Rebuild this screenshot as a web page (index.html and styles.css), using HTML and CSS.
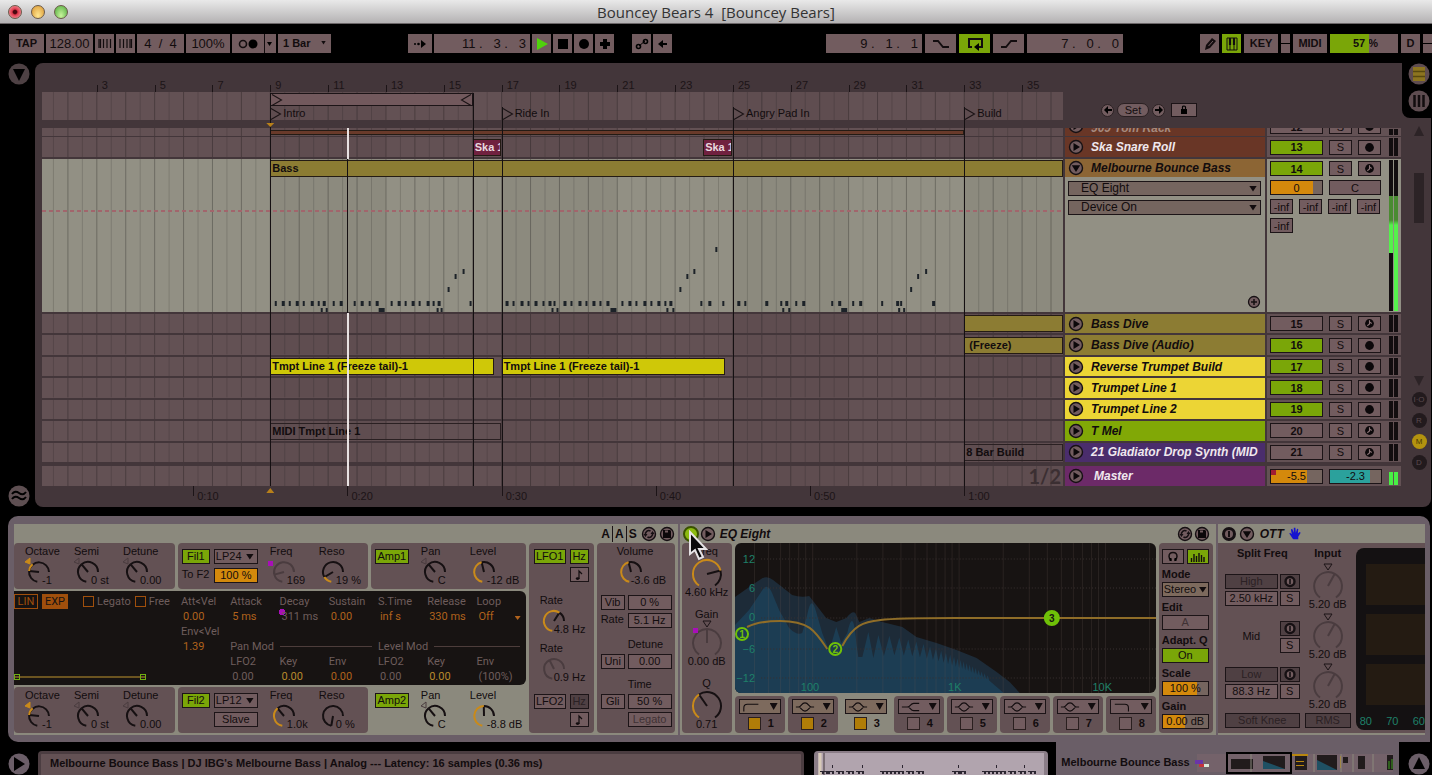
FILE: index.html
```html
<!DOCTYPE html>
<html lang="en">
<head>
    <meta charset="UTF-8"/>
    <title>Bouncey Bears 4</title>
    <link rel="stylesheet" href="styles.css">
</head>
<body>
<!-- shared icons -->
<svg class="defs" width="0" height="0">
    <defs>
        <symbol id="play" viewBox="0 0 16 16"><circle cx="8" cy="8" r="6.5" fill="#725c5f" stroke="#161013" stroke-width="1.4"/><path d="M5.5 4 12 8 5.5 12z" fill="#0c080a"/></symbol>
        <symbol id="fold" viewBox="0 0 16 16"><circle cx="8" cy="8" r="6.5" fill="#725c5f" stroke="#161013" stroke-width="1.4"/><path d="M3.8 5.2h8.4L8 12z" fill="#0c080a"/></symbol>
        <symbol id="power" viewBox="0 0 16 16"><circle cx="8" cy="8" r="5.5" fill="#725c5f" stroke="#161013" stroke-width="3"/><path d="M8 5v6" stroke="#161013" stroke-width="2"/></symbol>
        <symbol id="swap" viewBox="0 0 16 16"><circle cx="8" cy="8" r="6.5" fill="#725c5f" stroke="#161013" stroke-width="1.4"/><path d="M4.500 9a3.500 3.500 0 0 1 5-4M11.500 7a3.500 3.500 0 0 1-5 4" fill="none" stroke="#161013" stroke-width="1.6"/><path d="M2.500 8h4l-2 3zM13.500 8h-4l2-3z" fill="#161013"/></symbol>
        <symbol id="save" viewBox="0 0 16 16"><circle cx="8" cy="8" r="6.5" fill="#725c5f" stroke="#161013" stroke-width="1.4"/><path d="M4 4h7l1 1v7H4z" fill="#0c080a"/><path d="M6 4.500h3v2H6z" fill="#725c5f"/></symbol>
        <symbol id="rec" viewBox="0 0 10 10"><circle cx="5" cy="5" r="4" fill="#0c080a"/></symbol>
        <symbol id="recmidi" viewBox="0 0 10 10"><circle cx="5" cy="5" r="4" fill="#0c080a"/><path d="M5 2v3.5L3 7M5 3.5l2 1.5" fill="none" stroke="#8b7477" stroke-width="1"/></symbol>
        <symbol id="note" viewBox="0 0 10 12"><path d="M5 10V2l3 3" fill="none" stroke="#120c0e" stroke-width="1.2"/><ellipse cx="3.6" cy="9.6" rx="1.8" ry="1.4" fill="#120c0e"/></symbol>
        <symbol id="bell" viewBox="0 0 22 12"><path d="M1 6h3c3 0 3-4.500 7-4.500s4 4.500 7 4.500h3M4 6c3 0 3 4.500 7 4.500s4-4.500 7-4.500" fill="none" stroke="#120c0e" stroke-width="1.2"/></symbol>
        <symbol id="lowcut" viewBox="0 0 22 12"><path d="M2 11V7q0-4 4-4h12" fill="none" stroke="#120c0e" stroke-width="1.2"/></symbol>
        <symbol id="shelf" viewBox="0 0 22 12"><path d="M1 6h6c4 0 3-4 7-4h6M7 6c4 0 3 4 7 4h6" fill="none" stroke="#120c0e" stroke-width="1.2"/></symbol>
        <symbol id="highcut" viewBox="0 0 22 12"><path d="M2 3h11q4 0 4 4v4" fill="none" stroke="#120c0e" stroke-width="1.2"/></symbol>
        <symbol id="flag" viewBox="0 0 12 12"><path d="M1 .5 10.500 6 1 11.500" fill="none" stroke="#1a1315" stroke-width="1.1"/></symbol>
    </defs>
</svg>

<header class="titlebar">
    <div class="lights"><i class="red"></i><i class="amber"></i><i class="green"></i></div>
    <h1>Bouncey Bears 4&nbsp; [Bouncey Bears]</h1>
</header>

<nav class="toolbar">
    <div class="tools">
        <button class="w35 strong">TAP</button>
        <input class="w47" aria-label="Tempo" value="128.00">
        <button class="w19" aria-label="Nudge down"><svg width="14" height="9"><path d="M1 0v9M2.500 0v9M5.500 0v9M9 0v9M12.500 0v9" stroke="#120c0e" stroke-width="1.2"/></svg></button>
        <button class="w19" aria-label="Nudge up"><svg width="14" height="9"><path d="M1 0v9M4.500 0v9M8 0v9M11 0v9M12.500 0v9" stroke="#120c0e" stroke-width="1.2"/></svg></button>
        <input class="w47" aria-label="Signature" value="4  /  4">
        <input class="w44" aria-label="Groove amount" value="100%">
        <button class="w44" aria-label="Metronome"><svg width="40" height="19"><circle cx="9" cy="10" r="3.500" fill="none" stroke="#120c0e" stroke-width="1.6"/><circle cx="19" cy="10" r="4.500"/><path d="M30.500 0v19" stroke="#120c0e"/><path d="M33 8h5l-2.500 4z"/></svg></button>
        <div class="select w53 strong"><select aria-label="Quantization"><option>1 Bar</option></select></div>
    </div>
    <div class="gap"></div>
    <div class="tools">
        <button class="w24" aria-label="Follow"><svg width="16" height="10"><circle cx="3" cy="5" r="1"/><circle cx="6.500" cy="5" r="1.300"/><path d="M9 1l5 4-5 4z"/></svg></button>
        <input class="w96 right" aria-label="Position" value="11 .   3 .   3">
        <button class="w19" aria-label="Play"><svg width="12" height="12"><path d="M1 0v12l11-6z" fill="#4fd20c"/></svg></button>
        <button class="w19" aria-label="Stop"><svg width="10" height="10"><path d="M0 0h10v10H0z"/></svg></button>
        <button class="w19" aria-label="Record"><svg width="12" height="12"><circle cx="6" cy="6" r="5"/></svg></button>
        <button class="w19" aria-label="Overdub"><svg width="12" height="12"><path d="M4 1h4v3h3v4H8v3H4V8H1V4h3z"/></svg></button>
        <i class="notch"></i>
        <button class="w19" aria-label="Automation arm"><svg width="14" height="12"><path d="M4 8l6-5" stroke="#000"/><circle cx="3.500" cy="8.500" r="2" fill="none" stroke="#000" stroke-width="1.600"/><circle cx="10.500" cy="3.500" r="2" fill="none" stroke="#000" stroke-width="1.600"/></svg></button>
        <button class="w19" aria-label="Back to arrangement"><svg width="12" height="10"><path d="M1 5l5-4v3h4v2H6v3z"/></svg></button>
    </div>
    <div class="gap wide"></div>
    <div class="tools loose">
        <input class="w96 right" aria-label="Loop start" value="9 .   1 .   1">
        <button class="w31" aria-label="Punch in"><svg width="18" height="8"><path d="M1 1h5l5 6h6" fill="none" stroke="#120c0e" stroke-width="1.800"/></svg></button>
        <button class="w31 on" aria-label="Loop"><svg width="20" height="14"><path d="M7 10H4V2h13v8h-4" fill="none" stroke="#120c0e" stroke-width="2"/><path d="M14 6v8l-5-4z"/></svg></button>
        <button class="w31" aria-label="Punch out"><svg width="18" height="8"><path d="M1 7h5l5-6h6" fill="none" stroke="#120c0e" stroke-width="1.800"/></svg></button>
        <input class="w96 right" aria-label="Loop length" value="7 .   0 .   0">
    </div>
    <div class="gap"></div>
    <div class="tools loose">
        <button class="w19" aria-label="Draw mode"><svg width="14" height="14"><path d="M2 13l1-5 6-7 4 3-6 7z" fill="#120c0e"/><path d="M5.500 9l4.500-5" stroke="#725c5f"/></svg></button>
        <button class="w19 on" aria-label="Computer MIDI keyboard"><svg width="12" height="14"><path d="M1 1h10v12H1z" fill="none" stroke="#120c0e"/><path d="M4 1v7M8 1v7" stroke="#120c0e" stroke-width="2.200"/><path d="M4 8v5M8 8v5" stroke="#120c0e"/></svg></button>
        <button class="w34 strong">KEY</button>
        <div class="io"><i></i><i></i></div>
        <button class="w34 strong">MIDI</button>
        <div class="cpu strong"><i style="width: 57%"></i><span>57</span> %</div>
        <button class="w19 strong">D</button>
        <div class="io"><i></i><i></i></div>
    </div>
</nav>

<main>
    <aside class="rail">
        <button class="round" aria-label="Show browser"><svg width="22" height="22"><circle cx="11" cy="11" r="10.500" fill="#4e4144"/><path d="M5 6h12l-6 12z" fill="#000"/></svg></button>
        <button class="round" aria-label="Groove pool"><svg width="22" height="22"><circle cx="11" cy="11" r="10.500" fill="#5e4f52"/><path d="M4 9q3-4 7-1t7-1M4 14q3-4 7-1t7-1" fill="none" stroke="#000" stroke-width="2"/></svg></button>
    </aside>
    <section class="arrange">
        <div class="top">
            <div class="ruler" id="bars"></div>
            <div class="scrub">
                <svg class="grid"></svg>
                <div class="brace" style="--at: 9; --len: 7"><svg><use href="#flag"/></svg><svg class="flip"><use href="#flag"/></svg></div>
                <a href="#" class="locator" style="--at: 9"><svg><use href="#flag"/></svg>Intro</a>
                <a href="#" class="locator" style="--at: 17"><svg><use href="#flag"/></svg>Ride In</a>
                <a href="#" class="locator" style="--at: 25"><svg><use href="#flag"/></svg>Angry Pad In</a>
                <a href="#" class="locator" style="--at: 33"><svg><use href="#flag"/></svg>Build</a>
            </div>
            <div class="setter">
                <button class="dot" aria-label="Previous locator"><svg width="10" height="8"><path d="M1 4l4-4v3h4v2H5v3z"/></svg></button>
                <button class="pill">Set</button>
                <button class="dot" aria-label="Next locator"><svg width="10" height="8"><path d="M9 4L5 0v3H1v2h4v3z"/></svg></button>
                <button class="lock" aria-label="Lock"><svg width="8" height="10"><path d="M1 4h6v5H1z"/><path d="M2.500 4V2q0-1 1.500-1t1.500 1v2" fill="none" stroke="#000" stroke-width="1.200"/></svg></button>
            </div>
        </div>

        <div class="tracks">
            <div class="track sliver">
                <div class="lane"><div class="clip thin" style="--at: 9; --len: 24"></div></div>
                <div class="head brick"><svg class="ic"><use href="#play"/></svg><span>909 Tom Rack</span></div>
                <div class="mix"><button class="num">12</button><button class="sq">S</button><button class="sq" aria-label="Arm"><svg><use href="#rec"/></svg></button></div>
            </div>
            <div class="track snare">
                <div class="lane">
                    <div class="clip wine" style="--at: 16; --len: 0.970">Ska 1</div>
                    <div class="clip wine" style="--at: 23.970; --len: 1">Ska 1</div>
                </div>
                <div class="head brick"><svg class="ic"><use href="#play"/></svg><span>Ska Snare Roll</span></div>
                <div class="mix"><button class="num on">13</button><button class="sq">S</button><button class="sq" aria-label="Arm"><svg><use href="#rec"/></svg></button></div>
            </div>
            <div class="track bass">
                <div class="lane light">
                    <div class="clip olive" style="--at: 9; --len: 27.500">Bass</div>
                    <div class="automation"></div>
                    <svg class="notes" viewBox="0 0 1022 135" preserveAspectRatio="none"></svg>
                </div>
                <div class="head light">
                    <div class="name amber"><svg class="ic"><use href="#fold"/></svg><span>Melbourne Bounce Bass</span></div>
                    <div class="select"><select aria-label="Device"><option>EQ Eight</option></select></div>
                    <div class="select"><select aria-label="Parameter"><option>Device On</option></select></div>
                    <button class="add" aria-label="Add lane"><svg width="14" height="14"><circle cx="7" cy="7" r="5.500" fill="#725c5f" stroke="#161013" stroke-width="1.300"/><path d="M7 4v6M4 7h6" stroke="#161013" stroke-width="1.500"/></svg></button>
                </div>
                <div class="mix light">
                    <div class="line"><button class="num on">14</button><button class="sq">S</button><button class="sq" aria-label="Arm"><svg><use href="#recmidi"/></svg></button></div>
                    <div class="line"><button class="num vol">0</button><button class="pan">C</button></div>
                    <div class="line"><button class="sq">-inf</button><button class="sq">-inf</button><button class="sq">-inf</button><button class="sq">-inf</button></div>
                    <div class="line"><button class="sq">-inf</button></div>
                    <div class="levels"><i></i><i></i></div>
                </div>
            </div>
            <div class="stack">
                <div class="track">
                    <div class="lane"><div class="clip olive" style="--at: 33; --len: 3.500"></div></div>
                    <div class="head olive"><svg class="ic"><use href="#play"/></svg><span>Bass Dive</span></div>
                    <div class="mix"><button class="num">15</button><button class="sq">S</button><button class="sq" aria-label="Arm"><svg><use href="#recmidi"/></svg></button></div>
                </div>
                <div class="track">
                    <div class="lane"><div class="clip olive" style="--at: 33; --len: 3.500">&nbsp;(Freeze)</div></div>
                    <div class="head olive"><svg class="ic"><use href="#play"/></svg><span>Bass Dive (Audio)</span></div>
                    <div class="mix"><button class="num on">16</button><button class="sq">S</button><button class="sq" aria-label="Arm"><svg><use href="#rec"/></svg></button></div>
                </div>
                <div class="track">
                    <div class="lane">
                        <div class="clip lemon" style="--at: 9; --len: 7.720">Tmpt Line 1 (Freeze tail)-1</div>
                        <div class="clip lemon" style="--at: 17; --len: 7.740">Tmpt Line 1 (Freeze tail)-1</div>
                    </div>
                    <div class="head yellow"><svg class="ic"><use href="#play"/></svg><span>Reverse Trumpet Build</span></div>
                    <div class="mix"><button class="num on">17</button><button class="sq">S</button><button class="sq" aria-label="Arm"><svg><use href="#rec"/></svg></button></div>
                </div>
                <div class="track">
                    <div class="lane"></div>
                    <div class="head yellow"><svg class="ic"><use href="#play"/></svg><span>Trumpet Line 1</span></div>
                    <div class="mix"><button class="num on">18</button><button class="sq">S</button><button class="sq" aria-label="Arm"><svg><use href="#rec"/></svg></button></div>
                </div>
                <div class="track">
                    <div class="lane"></div>
                    <div class="head yellow"><svg class="ic"><use href="#play"/></svg><span>Trumpet Line 2</span></div>
                    <div class="mix"><button class="num on">19</button><button class="sq">S</button><button class="sq" aria-label="Arm"><svg><use href="#rec"/></svg></button></div>
                </div>
                <div class="track">
                    <div class="lane"><div class="clip empty" style="--at: 9; --len: 7.970">MIDI Tmpt Line 1</div></div>
                    <div class="head lime"><svg class="ic"><use href="#play"/></svg><span>T Mel</span></div>
                    <div class="mix"><button class="num">20</button><button class="sq">S</button><button class="sq" aria-label="Arm"><svg><use href="#recmidi"/></svg></button></div>
                </div>
                <div class="track">
                    <div class="lane"><div class="clip empty" style="--at: 33; --len: 3.500">8 Bar Build</div></div>
                    <div class="head violet"><svg class="ic"><use href="#play"/></svg><span>21 Gladiator Drop Synth (MID</span></div>
                    <div class="mix"><button class="num">21</button><button class="sq">S</button><button class="sq" aria-label="Arm"><svg><use href="#recmidi"/></svg></button></div>
                </div>
            </div>
            <div class="track master">
                <div class="lane"><b class="zoomlevel">1/2</b></div>
                <div class="head purple"><svg class="ic"><use href="#play"/></svg><span>Master</span></div>
                <div class="mix hot"><button class="num db">-5.5</button><button class="num cue">-2.3</button></div>
            </div>
            <div class="over">
                <i class="mark from-top" style="--at: 9"></i>
                <i class="mark from-top" style="--at: 16"></i>
                <i class="mark" style="--at: 17"></i>
                <i class="mark" style="--at: 25"></i>
                <i class="mark" style="--at: 33"></i>
                <i class="head-a" style="--at: 11.650"></i>
                <i class="head-b" style="--at: 11.650"></i>
                <i class="start" style="--at: 9"></i>
                <i class="start end" style="--at: 9"></i>
            </div>
        </div>
        <div class="times" id="times"></div>

        <div class="corner">
            <button class="round" aria-label="Arrangement view"><svg width="22" height="22"><circle cx="11" cy="11" r="10.500" fill="#5e4c50"/><path d="M5 4h12v14H5z" fill="#8c7420"/><path d="M5 8.500h12M5 13.500h12" stroke="#57480f" stroke-width="1.500"/></svg></button>
            <button class="round" aria-label="Session view"><svg width="22" height="22"><circle cx="11" cy="11" r="10.500" fill="#5e4c50"/><path d="M6.500 5v12M11 5v12M15.500 5v12" stroke="#120c0e" stroke-width="2.500"/></svg></button>
        </div>
        <div class="scroll">
            <svg width="12" height="10"><path d="M6 0l5 10H1z" fill="#2c2326"/></svg>
            <i></i>
            <svg width="12" height="10"><path d="M1 0h10L6 10z" fill="#2c2326"/></svg>
            <button>I·O</button>
            <button>R</button>
            <button class="lit">M</button>
            <button>D</button>
        </div>
    </section>
</main>

<section class="devices">
    <!-- Analog -->
    <article class="device analog">
        <header><span class="aas">A<i></i>A<i></i>S</span><svg class="ic"><use href="#swap"/></svg><svg class="ic"><use href="#save"/></svg></header>
        <div class="body">
            <div class="synth">
                <div class="strip">
                    <div class="box osc">
                        <div class="param"><span>Octave</span><svg class="knob" data-value="0.330" data-origin="0.500"></svg><output>-1</output></div>
                        <div class="param"><span>Semi</span><svg class="knob" data-value="0.500" data-origin="0.500"></svg><output>0 st</output></div>
                        <div class="param"><span>Detune</span><svg class="knob" data-value="0.500" data-origin="0.500"></svg><output>0.00</output></div>
                    </div>
                    <div class="box filter">
                        <div class="pair">
                            <button class="on">Fil1</button><div class="select"><select aria-label="Filter 1 type"><option>LP24</option></select></div>
                            <span>To F2</span><button class="gold">100 %</button>
                        </div>
                        <div class="param mod"><span>Freq</span><svg class="knob dim" data-value="0.250"></svg><output>169</output></div>
                        <div class="param"><span>Reso</span><svg class="knob" data-value="0.190"></svg><output>19 %</output></div>
                    </div>
                    <div class="box amp">
                        <button class="on">Amp1</button>
                        <div class="param"><span>Pan</span><svg class="knob" data-value="0.500" data-origin="0.500"></svg><output>C</output></div>
                        <div class="param"><span>Level</span><svg class="knob" data-value="0.600"></svg><output>-12 dB</output></div>
                    </div>
                </div>
                <div class="display">
                    <div class="shape">
                        <div class="modes"><button>LIN</button><button class="exp">EXP</button><label><input type="checkbox">Legato</label><label><input type="checkbox">Free</label></div>
                        <div class="env"><i></i><i></i></div>
                    </div>
                    <div class="cells">
                        <span>Att&lt;Vel</span><span>Attack</span><span>Decay</span><span>Sustain</span><span>S.Time</span><span>Release</span><span>Loop</span>
                        <b>0.00</b><b>5 ms</b><b class="grey pinned">311 ms</b><b>0.00</b><b>inf s</b><b>330 ms</b><b class="menu">Off</b>
                        <span class="row">Env&lt;Vel</span>
                        <b>1.39</b><span class="rule">Pan Mod</span><span class="rule">Level Mod</span>
                        <span class="second">LFO2</span><span>Key</span><span>Env</span><span>LFO2</span><span>Key</span><span>Env</span>
                        <b class="second grey">0.00</b><b class="gilt">0.00</b><b>0.00</b><b class="grey">0.00</b><b class="gilt">0.00</b><b class="grey">(100%)</b>
                    </div>
                </div>
                <div class="strip">
                    <div class="box osc">
                        <div class="param"><span>Octave</span><svg class="knob" data-value="0.330" data-origin="0.500"></svg><output>-1</output></div>
                        <div class="param"><span>Semi</span><svg class="knob" data-value="0.500" data-origin="0.500"></svg><output>0 st</output></div>
                        <div class="param"><span>Detune</span><svg class="knob" data-value="0.500" data-origin="0.500"></svg><output>0.00</output></div>
                    </div>
                    <div class="box filter">
                        <div class="pair">
                            <button class="on">Fil2</button><div class="select"><select aria-label="Filter 2 type"><option>LP12</option></select></div>
                            <span></span><button>Slave</button>
                        </div>
                        <div class="param"><span>Freq</span><svg class="knob" data-value="0.500"></svg><output>1.0k</output></div>
                        <div class="param"><span>Reso</span><svg class="knob" data-value="0"></svg><output>0 %</output></div>
                    </div>
                    <div class="box amp chosen">
                        <button class="on">Amp2</button>
                        <div class="param"><span>Pan</span><svg class="knob" data-value="0.500" data-origin="0.500"></svg><output>C</output></div>
                        <div class="param"><span>Level</span><svg class="knob" data-value="0.650"></svg><output>-8.8 dB</output></div>
                    </div>
                </div>
            </div>
            <div class="box lfo">
                <div class="pair"><button class="on">LFO1</button><button class="on">Hz</button><span></span><button aria-label="Sync 1"><svg width="10" height="12"><use href="#note"/></svg></button></div>
                <div class="param"><span>Rate</span><svg class="knob" data-value="0.780"></svg><output>4.8 Hz</output></div>
                <div class="param"><span>Rate</span><svg class="knob dim" data-value="0.550"></svg><output>0.9 Hz</output></div>
                <div class="pair"><button>LFO2</button><button class="off">Hz</button><span></span><button aria-label="Sync 2"><svg width="10" height="12"><use href="#note"/></svg></button></div>
            </div>
            <div class="box volume">
                <div class="param"><span>Volume</span><svg class="knob" data-value="0.600"></svg><output>-3.6 dB</output></div>
                <div class="pair"><button>Vib</button><button>0 %</button><span>Rate</span><button>5.1 Hz</button></div>
                <div class="pair"><span></span><span>Detune</span><button>Uni</button><button>0.00</button></div>
                <div class="pair"><span></span><span>Time</span><button>Gli</button><button>50 %</button><span></span><button class="faded">Legato</button></div>
            </div>
        </div>
    </article>

    <!-- EQ Eight -->
    <article class="device eq">
        <header><svg class="ic"><circle cx="8" cy="8" r="7" fill="#8cba10" stroke="#3a5200" stroke-width="2"/></svg><svg class="ic"><use href="#play"/></svg><h2>EQ Eight</h2><svg class="ic push"><use href="#swap"/></svg><svg class="ic"><use href="#save"/></svg></header>
        <div class="body">
            <div class="box dials">
                <div class="dial"><span>Freq</span><svg class="knob big" data-value="0.760"></svg><output>4.60 kHz</output></div>
                <div class="dial mod"><span>Gain</span><svg class="knob big dim capped" data-value="0.500"></svg><output>0.00 dB</output></div>
                <div class="dial"><span>Q</span><svg class="knob big" data-value="0.380"></svg><output>0.71</output></div>
            </div>
            <div class="center">
                <svg class="graph" viewBox="0 0 420 150" preserveAspectRatio="none">
                    <path d="M0 54 17 42 26 36Q32 32 38 37L47 44 57 52Q66 55 74 53L81 62 91 75 101 79 111 75Q117 67 120 70L124 79 134 75 147 79 167 84 181 94 201 100 221 107 241 115 261 129 274 139 284 150H0z" fill="#1d2b38"/>
                    <path id="spectrum" fill="#1c3d53"/>
                    <path id="freqlines" fill="none" stroke="#6e5c56" stroke-opacity="0.22"/>
                    <path d="M26 16H420M26 45H420M26 75H420M26 106H420M26 135H420" stroke="#393131" stroke-dasharray="1 2"/>
                    <path d="M12 84C22 79 34 78 45 78 74 78 80 88 92 106M107 103C118 82 128 79 145 77 160 75 190 75 220 75H420" fill="none" stroke="#8f6d28" stroke-width="2"/>
                    <g class="axis"><text x="20" y="20">12</text><text x="20" y="49">6</text><text x="20" y="78">0</text><text x="20" y="110">−6</text><text x="20" y="139">−12</text><text x="84" y="148">100</text><text x="226" y="148">1K</text><text x="376" y="148">10K</text></g>
                    <g class="nodes"><circle cx="7" cy="91" r="6"/><text x="7" y="95">1</text><circle cx="100" cy="106" r="6"/><text x="100" y="110">2</text><circle class="full" cx="316" cy="75" r="7"/><text class="dark" x="316" y="79">3</text></g>
                </svg>
                <div class="bands">
                    <div class="band"><button class="type warm" aria-label="Band 1 type"><svg><use href="#lowcut"/></svg></button><label><input type="checkbox" checked>1</label></div>
                    <div class="band"><button class="type warm" aria-label="Band 2 type"><svg><use href="#bell"/></svg></button><label><input type="checkbox" checked>2</label></div>
                    <div class="band chosen"><button class="type warm" aria-label="Band 3 type"><svg><use href="#bell"/></svg></button><label><input type="checkbox" checked>3</label></div>
                    <div class="band"><button class="type" aria-label="Band 4 type"><svg><use href="#shelf"/></svg></button><label><input type="checkbox">4</label></div>
                    <div class="band"><button class="type" aria-label="Band 5 type"><svg><use href="#bell"/></svg></button><label><input type="checkbox">5</label></div>
                    <div class="band"><button class="type" aria-label="Band 6 type"><svg><use href="#bell"/></svg></button><label><input type="checkbox">6</label></div>
                    <div class="band"><button class="type" aria-label="Band 7 type"><svg><use href="#bell"/></svg></button><label><input type="checkbox">7</label></div>
                    <div class="band"><button class="type" aria-label="Band 8 type"><svg><use href="#highcut"/></svg></button><label><input type="checkbox">8</label></div>
                </div>
            </div>
            <div class="box options">
                <div class="duo"><button aria-label="Audition"><svg width="12" height="11"><path d="M4.500 9.500Q2 8 2 5.500 2 1.500 6 1.500t4 4Q10 8 7.500 9.500" fill="none" stroke="#120c0e" stroke-width="1.500"/><path d="M2.500 7v3h2V7zM7.500 7v3h2V7z"/></svg></button><button class="on" aria-label="Analyze"><svg width="16" height="11"><path d="M1.500 11V7M4 11V3M6.500 11V5M9 11V2M11.500 11V4M14 11V6" stroke="#120c0e" stroke-width="1.400"/></svg></button></div>
                <label for="mode">Mode</label><div class="select"><select id="mode"><option>Stereo</option></select></div>
                <label for="edit">Edit</label><button id="edit" class="faded">A</button>
                <label for="adapt">Adapt. Q</label><button id="adapt" class="on">On</button>
                <label for="scale">Scale</label><button id="scale" class="fill75">100 %</button>
                <label for="gain">Gain</label><button id="gain" class="fill50">0.00 dB</button>
            </div>
        </div>
        <svg class="cursor" width="22" height="32"><path d="M2 2v22l5-4 4 9 4-2-4-8h7z" fill="#0a0809" stroke="#e6e2e4" stroke-width="2"/></svg>
    </article>

    <!-- OTT -->
    <article class="device ott">
        <header><svg class="ic"><use href="#power"/></svg><svg class="ic"><use href="#fold"/></svg><h2>OTT</h2><svg width="12" height="13" viewBox="0 0 14 16"><path d="M4 14 0 8l1-1 2 2-1-6 1.500-1 2 5V1H7.500l.5 6 1.500-5 1.500.5L10.500 8l2-2 1.500 1-3 5v3H5z" fill="#1613cf"/></svg></header>
        <div class="body">
            <div class="splits">
                <strong>Split Freq</strong>
                <div class="split"><button class="off">High</button><button class="off" aria-label="High on"><svg><use href="#power"/></svg></button><button>2.50 kHz</button><button>S</button></div>
                <div class="split"><span>Mid</span><button class="off" aria-label="Mid on"><svg><use href="#power"/></svg></button><button>S</button></div>
                <div class="split"><button class="off">Low</button><button class="off" aria-label="Low on"><svg><use href="#power"/></svg></button><button>88.3 Hz</button><button>S</button></div>
                <button class="off">Soft Knee</button>
            </div>
            <div class="inputs">
                <strong>Input</strong>
                <div class="dial"><svg class="knob big dim capped" data-value="0.600"></svg><output>5.20 dB</output></div>
                <div class="dial"><svg class="knob big dim capped" data-value="0.600"></svg><output>5.20 dB</output></div>
                <div class="dial"><svg class="knob big dim capped" data-value="0.600"></svg><output>5.20 dB</output></div>
                <button class="off">RMS</button>
            </div>
            <div class="meter"><i></i><i></i><i></i><p><span>80</span><span>70</span><span>60</span></p></div>
        </div>
    </article>
</section>

<footer>
    <button class="round" aria-label="Info"><svg width="22" height="22"><circle cx="11" cy="11" r="10.500" fill="#6b5e68"/><path d="M6 4v14l11-7z" fill="#000"/></svg></button>
    <p class="status">Melbourne Bounce Bass | DJ IBG's Melbourne Bass | Analog --- Latency: 16 samples (0.36 ms)</p>
    <div class="overview"><svg width="226" height="22"><path d="M2 0v22" stroke="#d8cbb8" stroke-width="3"/><path d="M6 0v22" stroke="#43363a"/><path id="mini" fill="#2b2530"/></svg></div>
    <div class="tab">
        <span>Melbourne Bounce Bass</span>
        <svg width="206" height="24">
            <path d="M4 3h196v18H4z" fill="#74626a"/>
            <path d="M2 9h8v4H2z" fill="#6a35a8"/><path d="M6 13h5v3H6z" fill="#c3343c"/><path d="M11 13h5v3h-5z" fill="#d8e8d8"/>
            <path d="M38 8h22v10H38zM70 5h22v13H70zM102 4h12v15h-12zM124 4h20v15h-20zM150 6h5v6h-5zM165 5h7v13h-7zM194 4h6v15h-6z" fill="#211b1c"/>
            <path d="M124 9l20 10h-20zM70 10l22 8H70z" fill="#1f5063"/>
            <path d="M98 3h17v2H98zM103 10h8v1h-8zM103 14h8v1h-8zM147 5h1v12h-1z" fill="#b8860f"/>
            <path d="M196 10v8M199 8v10" stroke="#3fa31e"/>
            <path d="M58 3v18M121 3v18M148 3v18M160 3v18M180 3v18" stroke="#8b897d"/>
            <path d="M34 2h64v20H34z" fill="none" stroke="#000" stroke-width="2"/>
        </svg>
    </div>
    <button class="round" aria-label="Hide devices"><svg width="22" height="22"><circle cx="11" cy="11" r="10.500" fill="#6b5e68"/><path d="M11 4l6 12H5z" fill="#000"/></svg></button>
</footer>
<script src="script.js"></script>
</body>
</html>
```
FILE: styles.css
```css
* {
    box-sizing: border-box;
}

body {
    margin: 0;
    min-height: 100vh;
    display: flex;
    flex-direction: column;
    overflow: hidden;
    background: #000;
    color: #120c0e;
    font: 11px/13px "Liberation Sans", Arial, sans-serif;
}

h1, h2, p {
    margin: 0;
}

a {
    color: inherit;
    text-decoration: none;
}

button, input, select {
    margin: 0;
    padding: 0;
    border: 0;
    border-radius: 0;
    color: inherit;
    background: #725c5f;
    font: inherit;
}

button {
    display: flex;
    align-items: center;
    justify-content: center;
    white-space: nowrap;
}

select {
    width: 100%;
    height: 100%;
    appearance: none;
    background: none;
}

.defs {
    position: absolute;
}

.strong {
    font-weight: bold;
}

.select {
    position: relative;
    background: #725c5f;
}

.select::after {
    content: "";
    position: absolute;
    right: 3px;
    top: calc(50% - 3px);
    width: 8px;
    height: 6px;
    background: #120c0e;
    clip-path: polygon(0 0, 100% 0, 50% 100%);
    pointer-events: none;
}

.ic {
    flex: none;
    width: 16px;
    height: 16px;
}

.round {
    width: 22px;
    height: 22px;
    background: none;
}

/* title bar */
.titlebar {
    position: relative;
    flex: none;
    height: 24px;
    border-bottom: 1px solid #6b6668;
    background: linear-gradient(#e9e9e9, #b4b2b3);
}

.titlebar h1 {
    color: #333;
    font: 15px/24px "Open Sans", "Lucida Grande", sans-serif;
    text-align: center;
}

.lights {
    position: absolute;
    left: 8px;
    top: 5px;
    display: flex;
    gap: 9px;
}

.lights i {
    width: 14px;
    height: 14px;
    border: 1px solid #6b5a4a;
    border-radius: 50%;
}

.lights .red {
    background: radial-gradient(#4a0810 20%, #e0384c 35%, #f8b0b4);
}

.lights .amber {
    background: radial-gradient(at 50% 80%, #ffe690, #d99530);
}

.lights .green {
    background: radial-gradient(at 50% 80%, #c8f59c, #4fa93c);
}

/* transport */
.toolbar {
    flex: none;
    display: flex;
    align-items: center;
    height: 39px;
    padding-left: 9px;
    font-size: 13px;
}

.tools {
    display: flex;
    gap: 2px;
}

.tools.loose {
    gap: 3px;
}

.tools > * {
    flex: none;
    height: 19px;
}

.tools input {
    text-align: center;
    white-space: pre;
}

.tools input.right {
    padding-right: 4px;
    text-align: right;
}

.tools .strong {
    font-size: 11px;
}

.tools .select select {
    padding-left: 5px;
    font-weight: bold;
}

.tools .select::after {
    right: 5px;
    width: 5px;
    height: 4px;
}

.gap {
    flex: 1;
}

.gap.wide {
    flex: 2;
}

.w19 { width: 19px; }
.w24 { width: 24px; }
.w31 { width: 31px; }
.w34 { width: 34px; }
.w35 { width: 35px; }
.w44 { width: 44px; }
.w47 { width: 47px; }
.w53 { width: 53px; }
.w96 { width: 96px; }

.notch {
    width: 14px;
}

.on {
    background: #7aa608;
}

.io {
    display: grid;
    gap: 1px;
    width: 9px;
}

.io i {
    background: #725c5f;
}

.cpu {
    position: relative;
    width: 68px;
    padding: 0 20px 0 0;
    background: #725c5f;
    line-height: 18px;
    text-align: right;
}

.cpu i {
    position: absolute;
    inset: 0 auto 0 0;
    background: #7aa608;
}

.cpu span {
    position: relative;
}

/* arrangement */
main {
    flex: 1;
    display: flex;
    min-height: 444px;
}

.rail {
    display: flex;
    flex-direction: column;
    justify-content: space-between;
    width: 35px;
    padding: 0 0 0 8px;
}

.arrange {
    --side: 368px;
    position: relative;
    flex: 1;
    display: flex;
    flex-direction: column;
    margin-right: 1px;
    padding: 0 0 0 7px;
    border-radius: 8px;
    background: #43363a;
}

.top {
    position: relative;
    height: 65px;
    padding: 12px var(--side) 0 0;
}

.ruler, .times {
    position: relative;
    height: 17px;
    color: #1c1417;
}

.ruler span, .times span {
    position: absolute;
    bottom: 0;
    left: calc((var(--at) - 1.104) * 2.832%);
    height: 7px;
    padding-left: 4px;
    border-left: 1px solid #1c1417;
    line-height: 0;
}

.scrub {
    position: relative;
    height: 28px;
    background: #635154;
}

.grid {
    position: absolute;
    inset: 0;
    width: 100%;
    height: 100%;
}

.brace, .locator, .clip, .over i {
    position: absolute;
    left: calc((var(--at) - 1.104) * 2.832%);
}

.brace {
    top: 1px;
    display: flex;
    justify-content: space-between;
    width: calc(var(--len) * 2.832%);
    height: 13px;
    border: 1px solid #1c1417;
    background: #72595d;
}

.brace svg, .locator svg {
    width: 12px;
    height: 12px;
}

.flip {
    transform: scaleX(-1);
}

.locator {
    top: 15px;
    display: flex;
    gap: 1px;
    align-items: center;
}

.setter {
    position: absolute;
    right: 234px;
    top: 40px;
    display: flex;
    gap: 3px;
    align-items: center;
}

.dot {
    width: 13px;
    height: 13px;
    border: 1px solid #2a2022;
    border-radius: 50%;
}

.pill {
    width: 32px;
    height: 14px;
    border: 1px solid #2a2022;
    border-radius: 7px;
}

.lock {
    width: 26px;
    height: 14px;
    margin-left: 3px;
    border: 1px solid #1c1417;
}

.tracks {
    position: relative;
    padding-right: 30px;
}

.track {
    display: grid;
    grid-template-columns: 1fr 200px 134px;
    grid-template-rows: 100%;
    gap: 2px;
    min-height: 0;
}

.sliver {
    height: 9px;
    overflow: hidden;
    border-bottom: 1px solid #43363a;
}

.snare {
    height: 22px;
    padding-bottom: 2px;
}

.bass {
    height: 154px;
    border-bottom: 1px solid #43363a;
}

.stack {
    display: grid;
    grid-template-rows: repeat(7, 1fr);
    height: 150px;
}

.stack .track {
    padding: 1px 0;
}

.master {
    height: 23px;
    padding: 3px 0 0;
}

.lane {
    position: relative;
    min-width: 0;
    background: #635154;
}

.lane.light, .head.light, .mix.light {
    background: #929084;
}

.clip {
    bottom: 1px;
    width: calc(var(--len) * 2.832%);
    max-width: calc(100% - (var(--at) - 1.104) * 2.832%);
    height: 17px;
    padding-left: 1px;
    overflow: hidden;
    border: 1px solid #241b14;
    font-weight: bold;
    line-height: 15px;
    white-space: nowrap;
}

.thin {
    height: 5px;
    background: #693a2a;
}

.wine {
    background: #70213f;
    color: #e8d8de;
}

.olive {
    background: #8c7c33;
}

.lemon {
    background: #cfc808;
}

.empty {
    border-color: #2a2022;
}

.bass .clip {
    top: 1px;
}

.automation {
    position: absolute;
    top: 51px;
    width: 100%;
    height: 2px;
    background: repeating-linear-gradient(90deg, #a2656c 0 4px, transparent 4px 7px);
}

.notes {
    position: absolute;
    left: 0;
    bottom: 0;
    width: 100%;
    height: 135px;
}

.zoomlevel {
    position: absolute;
    right: 2px;
    bottom: 0;
    color: #3b2f32;
    font: bold 20px/20px Lato, sans-serif;
}

.head, .name {
    display: flex;
    align-items: center;
    gap: 7px;
    padding-left: 3px;
    overflow: hidden;
    font: italic bold 12px/16px "Liberation Sans", Arial, sans-serif;
    white-space: nowrap;
}

.head.light {
    display: block;
    position: relative;
    padding: 0;
}

.name {
    height: 18px;
}

.head .select {
    height: 15px;
    margin: 4px 4px 4px 3px;
    border: 1px solid #1c1417;
    background: #75655f;
    font: 12px/13px "Liberation Sans", Arial, sans-serif;
}

.head .select select {
    padding-left: 12px;
}

.add {
    position: absolute;
    right: 4px;
    bottom: 3px;
    background: none;
}

.brick, .violet, .purple {
    color: #f0e8ee;
}

.brick {
    background: #693626;
}

.name.amber {
    background: #8c6534;
}

.yellow {
    background: #ecd535;
}

.lime {
    background: #81a806;
}

.violet {
    background: #4a2d6c;
}

.purple {
    background: #6c2a68;
}

.master .head {
    gap: 10px;
}

.mix {
    position: relative;
    display: flex;
    align-items: center;
    gap: 6px;
    padding-left: 3px;
    background: #635154;
    line-height: 12px;
}

.sliver .head, .sliver .mix {
    align-items: flex-end;
    padding-bottom: 2px;
}

.sliver .head {
    color: #a58a7e;
    line-height: 12px;
}

.mix::after, .levels {
    content: "";
    position: absolute;
    right: 3px;
    top: 1px;
    bottom: 1px;
    width: 9px;
    background: linear-gradient(90deg, #120d0f 4px, #635154 4px 5px, #120d0f 5px);
}

.mix.hot::after {
    background: linear-gradient(90deg, #48ef45 4px, #635154 4px 5px, #48ef45 5px);
    top: 6px;
}

.mix.light {
    display: block;
    padding-top: 2px;
}

.mix.light::after {
    display: none;
}

.levels {
    display: flex;
    gap: 1px;
    background: none;
}

.levels i {
    flex: 1;
    background: linear-gradient(#120d0f 36px, #4a8b32 36px 60px, #55f04c 65px 93px, #120d0f 93px);
}

.levels i + i {
    background: linear-gradient(#120d0f 36px, #4a8b32 36px 60px, #55f04c 65px);
}

.line {
    display: flex;
    gap: 6px;
    height: 15px;
    margin-bottom: 4px;
}

.mix button {
    height: 15px;
    border: 1px solid #1c1417;
}

.num, .num.on {
    width: 53px;
    font-weight: bold;
}

.sq {
    width: 23px;
}

.mix .sq svg {
    width: 11px;
    height: 11px;
}

.pan {
    width: 52px;
}

.num.vol {
    background: linear-gradient(90deg, #d4890c 83%, #75655f 83%);
    font-weight: normal;
}

.num.db {
    background: linear-gradient(#a01c34, #a01c34) 0 0 / 5px 5px no-repeat, linear-gradient(90deg, #d4890c 70%, #75655f 70%);
    font-weight: normal;
}

.num.cue {
    background: linear-gradient(90deg, #2ba19c 78%, #75655f 78%);
    font-weight: normal;
}

.over {
    position: absolute;
    inset: 0 var(--side) 0 0;
    pointer-events: none;
}

.over .mark {
    top: -21px;
    bottom: 0;
    width: 1px;
    background: #151012;
}

.over .from-top {
    top: -35px;
}

.over .head-a, .over .head-b {
    top: 0;
    width: 2px;
    height: 31px;
    background: #e8e2e2;
}

.over .head-b {
    top: 185px;
    bottom: 0;
    height: auto;
}

.over .head-a::after {
    content: "";
    position: absolute;
    top: 31px;
    width: 1px;
    height: 154px;
    background: #151012;
}

.over .start {
    top: -5px;
    width: 8px;
    height: 4px;
    margin-left: -4px;
    background: #b8801a;
    clip-path: polygon(0 0, 100% 0, 50% 100%);
}

.over .start.end {
    top: auto;
    bottom: -7px;
    height: 5px;
    clip-path: polygon(50% 0, 100% 100%, 0 100%);
}

.times {
    height: 21px;
    margin-right: var(--side);
}

.times span {
    top: 0;
    bottom: auto;
    height: 10px;
    padding-left: 3px;
    line-height: 20px;
}

.corner {
    position: absolute;
    right: -1px;
    top: 0;
    display: flex;
    flex-direction: column;
    gap: 5px;
    width: 30px;
    height: 55px;
    padding-left: 6px;
    border-radius: 0 0 0 8px;
    background: #000;
}

.scroll {
    position: absolute;
    right: 2px;
    top: 63px;
    display: flex;
    flex-direction: column;
    align-items: center;
    width: 20px;
}

.scroll i {
    width: 10px;
    height: 50px;
    margin: 37px 0 153px;
    background: #2c2326;
}

.scroll button {
    width: 15px;
    height: 15px;
    margin-top: 6px;
    border-radius: 50%;
    background: #221a1d;
    color: #5b4b4f;
    font-size: 8px;
}

.scroll .lit {
    background: #b3930f;
    color: #4a3b05;
}

/* device chain */
.devices {
    flex: none;
    display: flex;
    gap: 2px;
    height: 226px;
    margin: 9px 2px 0 8px;
    padding: 8px 5px 7px 6px;
    overflow: hidden;
    border-radius: 10px 10px 0 10px;
    background: #6a5e67;
}

.device {
    position: relative;
    display: flex;
    flex-direction: column;
    background: #8b897d;
}

.device header {
    display: flex;
    align-items: center;
    gap: 2px;
    height: 19px;
    padding: 0 3px;
}

.device h2 {
    padding: 0 3px;
    font: italic bold 12px/16px "Liberation Sans", Arial, sans-serif;
}

.body {
    flex: 1;
    display: flex;
    gap: 3px;
    padding-bottom: 2px;
}

.box {
    border-radius: 4px;
    background: #635154;
}

.device button, .device .select {
    height: 15px;
    border: 1px solid #1c1417;
    font-size: 11px;
}

.device button.off {
    background: #4f4043;
    color: #2b2124;
}

.device button.faded {
    color: #3f3134;
}

.device button.gold {
    background: #d4890c;
}

.analog {
    flex: 666;
}

.analog header {
    justify-content: flex-end;
}

.aas {
    display: flex;
    gap: 2px;
    margin-right: 2px;
    font: bold 12px/16px "Liberation Sans Narrow", "Liberation Sans", sans-serif;
}

.aas i {
    width: 1px;
    background: #1c1417;
}

.analog .body {
    padding-right: 3px;
}

.synth {
    flex: 1;
    display: flex;
    flex-direction: column;
    gap: 2px;
}

.strip {
    display: flex;
    gap: 3px;
    height: 46px;
}

.strip .box {
    display: flex;
    padding-top: 2px;
}

.osc {
    flex: 157;
    padding-left: 11px;
}

.filter {
    flex: 193;
}

.strip .amp {
    flex: 158;
    padding-left: 4px;
}

.amp button {
    width: 34px;
    margin: 4px 12px 0 0;
}

.box.chosen {
    background: none;
}

.param {
    display: grid;
    grid-template: 13px 28px / 49px;
}

.param .knob, .param output {
    grid-area: 2 / 1;
}

.param output {
    align-self: end;
    padding-left: 17px;
    line-height: 12px;
    white-space: nowrap;
}

.knob {
    width: 28px;
    height: 28px;
    overflow: visible;
}

.pair {
    display: grid;
    grid-template-columns: 28px 44px;
    gap: 4px;
    align-content: start;
    padding: 4px 12px 0 4px;
    white-space: nowrap;
}

.pair .select select {
    padding-left: 1px;
}

.mod {
    position: relative;
}

.mod::before {
    content: "";
    position: absolute;
    left: -2px;
    top: 16px;
    width: 5px;
    height: 5px;
    background: #a80fb8;
}

.display {
    flex: 1;
    display: flex;
    padding-top: 3px;
    border-radius: 0 6px 6px 0;
    background: #171312;
    color: #6e5d5c;
    font: 11px/15px Roboto, sans-serif;
}

.shape {
    display: flex;
    flex-direction: column;
    width: 167px;
}

.modes {
    display: flex;
    align-items: center;
    gap: 4px;
}

.modes button {
    width: 24px;
    border-color: #a04f0c;
    background: none;
    color: #a04f0c;
}

.modes .exp {
    width: 26px;
    background: #a04f0c;
    color: #171312;
}

.modes label {
    display: flex;
    align-items: center;
    gap: 3px;
}

.modes button + label {
    margin-left: 11px;
}

.modes input {
    width: 11px;
    height: 11px;
    appearance: none;
    border: 1px solid #a04f0c;
    background: none;
}

.env {
    display: flex;
    justify-content: space-between;
    width: 132px;
    height: 2px;
    margin-top: 67px;
    background: #6b5420;
}

.env i {
    width: 6px;
    height: 6px;
    margin-top: -2px;
    border: 1px solid #6fae12;
}

.cells {
    flex: 1;
    display: grid;
    grid-template-columns: repeat(7, 1fr);
    grid-auto-rows: 15px;
}

.cells b {
    padding-left: 2px;
    color: #b0621c;
    font-weight: normal;
}

.cells .grey {
    color: #6e5d5c;
}

.cells .pinned {
    background: radial-gradient(circle at 3px 3px, #a80fb8 3px, transparent 3px);
}

.cells .gilt {
    color: #b78a2c;
}

.cells .row {
    grid-column: 1 / -1;
}

.cells .second {
    grid-column: 2;
}

.cells .menu {
    display: flex;
    justify-content: space-between;
    padding-right: 5px;
}

.menu::after {
    content: "";
    width: 6px;
    height: 4px;
    margin-top: 7px;
    background: #b0621c;
    clip-path: polygon(0 0, 100% 0, 50% 100%);
}

.cells .rule {
    grid-column: span 3;
    display: flex;
    align-items: center;
    gap: 6px;
    padding-right: 6px;
}

.rule::after {
    content: "";
    flex: 1;
    height: 1px;
    background: #4d3d3b;
}

.lfo {
    display: flex;
    flex-direction: column;
    width: 65px;
    padding: 2px 0;
}

.lfo .pair {
    grid-template-columns: 32px 19px;
    gap: 3px 4px;
    padding: 4px 5px 0;
}

.lfo .param {
    margin: 12px 0 0 11px;
}

.lfo .param + .param {
    margin: 7px 0 7px 11px;
}

.lfo .param output {
    padding-left: 14px;
}

.volume {
    display: flex;
    flex-direction: column;
    justify-content: space-between;
    width: 78px;
    padding: 2px 0 6px;
}

.volume .param {
    margin-left: 20px;
}

.volume .param output {
    padding-left: 14px;
}

.volume .pair {
    grid-template-columns: 24px 44px;
    gap: 3px;
    padding: 0 4px;
}

.eq {
    flex: 533;
    padding: 0 3px 0 2px;
}

.eq header {
    gap: 1px;
    padding: 0 3px 0 1px;
}

.push {
    margin-left: auto;
}

.dials {
    display: flex;
    flex-direction: column;
    justify-content: space-between;
    width: 50px;
    padding: 2px 0 3px;
}

.dial {
    display: flex;
    flex-direction: column;
    align-items: center;
    line-height: 12px;
}

.dial.mod::before {
    left: 11px;
    top: 20px;
}

.knob.big {
    width: 34px;
    height: 34px;
    margin-bottom: -5px;
}

.knob.capped {
    margin-top: 6px;
}

.center {
    flex: 1;
    display: flex;
    flex-direction: column;
    gap: 3px;
    min-width: 0;
}

.graph {
    width: 100%;
    height: 150px;
    border-radius: 6px;
    background: #171312;
}

.axis {
    fill: #1f8069;
    font-size: 11px;
    text-anchor: end;
}

.nodes circle {
    fill: none;
    stroke: #6fc008;
    stroke-width: 2;
}

.nodes .full {
    fill: #6fc008;
}

.nodes text {
    fill: #6fc008;
    font-size: 10px;
    font-weight: bold;
    text-anchor: middle;
}

.nodes .dark {
    fill: #171312;
}

.bands {
    flex: 1;
    display: grid;
    grid-template-columns: repeat(8, 1fr);
    gap: 3px;
}

.band {
    display: flex;
    flex-direction: column;
    gap: 3px;
    padding: 3px 4px 0;
    border-radius: 4px;
    background: #635154;
}

.band.chosen {
    background: none;
}

.band .type {
    position: relative;
    justify-content: flex-start;
    padding-left: 2px;
}

.type.warm {
    background: #7d6a5d;
}

.type svg {
    width: 20px;
    height: 12px;
}

.type::after {
    content: "";
    position: absolute;
    right: 2px;
    top: 3px;
    width: 8px;
    height: 7px;
    background: #120c0e;
    clip-path: polygon(0 0, 100% 0, 50% 100%);
}

.band label {
    display: flex;
    align-items: center;
    gap: 7px;
    padding-left: 9px;
    font-weight: bold;
}

.band input {
    width: 13px;
    height: 13px;
    appearance: none;
    border: 1px solid #2a1f1f;
    background: #725c5f;
}

.band input:checked {
    background: #b07d08;
}

.options {
    display: flex;
    flex-direction: column;
    width: 54px;
    padding: 6px 4px 0 3px;
}

.options label {
    margin: 4px 0 1px;
    font-weight: bold;
}

.options .select {
    background: #7d6a5d;
}

.options .select select {
    padding-left: 1px;
}

.options .select::after {
    right: 1px;
}

.duo {
    display: flex;
    justify-content: space-between;
}

.duo button {
    width: 22px;
}

.options .fill75 {
    background: linear-gradient(90deg, #d4890c 75%, #75655f 75%);
}

.options .fill50 {
    background: linear-gradient(90deg, #d4890c 50%, #75655f 50%);
}

.cursor {
    position: absolute;
    left: 8px;
    top: 6px;
}

.ott {
    flex: 208;
}

.ott .body {
    gap: 5px;
    padding: 4px 0 2px 7px;
    border-bottom: 2px solid #8b897d;
    background: #635154;
}

.splits, .inputs {
    display: flex;
    flex-direction: column;
    justify-content: space-between;
    width: 75px;
    padding-bottom: 3px;
}

.splits strong, .inputs strong {
    text-align: center;
}

.inputs {
    width: 46px;
}

.split {
    display: grid;
    grid-template-columns: 53px 20px;
    gap: 2px;
    align-items: center;
}

.split span {
    grid-row: span 2;
    text-align: center;
}

.split svg {
    width: 14px;
    height: 13px;
}

.meter {
    flex: 1;
    display: flex;
    flex-direction: column;
    gap: 9px;
    margin: 1px 0;
    padding: 16px 0 0 10px;
    border-radius: 8px 0 0 8px;
    background: #141112;
}

.meter i {
    height: 41px;
    background: #241b12;
}

.meter p {
    display: flex;
    justify-content: space-between;
    margin: 1px 0 0 -6px;
    color: #1f8069;
}

/* status row */
footer {
    flex: none;
    display: flex;
    align-items: flex-end;
    height: 33px;
    padding: 0 2px 0 8px;
    font-weight: bold;
}

.status {
    flex: 765;
    height: 24px;
    margin: 0 10px 0 8px;
    padding: 2px 9px;
    border: 3px solid #4b3d41;
    border-bottom: 0;
    border-radius: 4px 4px 0 0;
    background: #635154;
    line-height: 15px;
}

.overview {
    flex: 233;
    height: 24px;
    padding: 2px 4px 0;
    border-radius: 4px 4px 0 0;
    background: #8a7d87;
}

.overview svg {
    display: block;
    width: 100%;
    background: #b1a4ae;
}

.tab {
    flex: 348;
    display: flex;
    align-items: center;
    justify-content: space-between;
    height: 33px;
    margin: 0 9px 0 8px;
    padding: 8px 0 0 5px;
    background: #6a5e67;
    white-space: nowrap;
}
```
FILE: script.js
```js
const NS = "http://www.w3.org/2000/svg";

const draw = (parent, tag, attrs) => {
  const el = document.createElementNS(NS, tag);
  for (const key in attrs) el.setAttribute(key, attrs[key]);
  parent.appendChild(el);
};

// bar numbers and time labels
const bars = document.getElementById("bars");
for (let bar = 3; bar <= 35; bar += 2) {
  bars.innerHTML += `<span style="--at: ${bar}">${bar}</span>`;
}
const times = document.getElementById("times");
["0:10", "0:20", "0:30", "0:40", "0:50", "1:00"].forEach((label, i) => {
  times.innerHTML += `<span style="--at: ${1 + (i + 1) * 16 / 3}">${label}</span>`;
});

// half-bar grid, under the clips of every lane
document.querySelectorAll(".lane").forEach((lane) => {
  const svg = document.createElementNS(NS, "svg");
  svg.setAttribute("class", "grid");
  lane.prepend(svg);
});
document.querySelectorAll(".grid").forEach((svg) => {
  for (let bar = 1.5; bar < 36.5; bar += 0.5) {
    const x = (bar - 1.104) * 2.832 + "%";
    const opacity = bar % 1 === 0 ? 0.26 : 0.14;
    draw(svg, "line", { x1: x, x2: x, y1: 0, y2: "100%", stroke: "#000", "stroke-opacity": opacity });
  }
  for (let bar = 9; bar < 36; bar += 8) {
    draw(svg, "rect", { x: (bar - 1.104) * 2.832 + "%", y: 0, width: "11.3%", height: "100%", "fill-opacity": 0.04 });
  }
});

// midi notes: x, y, width
const notes = document.querySelector(".notes");
const base = [234, 241, 248, 255, 262, 270, 277, 282, 292, 299, 313, 320, 328, 335, 350, 357, 364, 371, 378, 386, 392, 397, 429,
  465, 472, 480, 487, 494, 502, 508, 513, 523, 530, 538, 545, 552, 559, 566, 581, 588, 595, 603, 610, 617, 624, 629, 660, 668, 682,
  697, 704, 725, 740, 745, 755, 762, 791, 798, 812, 819, 841, 856, 860, 892];
const low = [280, 285, 396, 400, 511, 516, 626, 632, 742, 748, 858, 863];
const high = [[407, 112], [414, 99], [422, 94], [639, 112], [646, 99], [653, 94], [675, 72], [870, 112], [877, 99], [885, 94]];
base.forEach((x, i) => draw(notes, "rect", { x: x - 1, y: 124, width: i % 2 ? 3 : 2, height: 5, fill: "#1c2228" }));
low.forEach((x) => draw(notes, "rect", { x: x - 1, y: 131, width: 2, height: 4, fill: "#1c2228" }));
[337, 569, 800].forEach((x) => draw(notes, "rect", { x, y: 131, width: 6, height: 4, fill: "#1c2228" }));
high.forEach(([x, y]) => draw(notes, "rect", { x: x - 1, y: y - 2, width: 2, height: 5, fill: "#1c2228" }));

// knobs
const point = (c, r, deg) => {
  const a = (deg - 90) * Math.PI / 180;
  return `${(c + r * Math.cos(a)).toFixed(1)} ${(c + r * Math.sin(a)).toFixed(1)}`;
};
const arc = (c, r, from, to) =>
  `M${point(c, r, from)}A${r} ${r} 0 ${to - from > 180 ? 1 : 0} 1 ${point(c, r, to)}`;

document.querySelectorAll(".knob").forEach((svg) => {
  const big = svg.classList.contains("big");
  const dim = svg.classList.contains("dim");
  const c = big ? 17 : 14;
  const r = big ? 14 : 10;
  const start = big ? 215 : 190;
  const sweep = big ? 290 : 260;
  const value = start + sweep * Number(svg.dataset.value);
  const origin = start + sweep * Number(svg.dataset.origin || 0);
  const ink = dim ? "#4a3c3f" : "#161012";
  draw(svg, "path", { d: arc(c, r, value, start + sweep), fill: "none", stroke: ink, "stroke-width": 2 });
  draw(svg, "path", { d: `M${c} ${c}L${point(c, r, value)}`, stroke: ink, "stroke-width": 2 });
  if (svg.dataset.origin) {
    draw(svg, "path", { d: arc(c, r, start, value), fill: "none", stroke: ink, "stroke-width": 2 });
    const off = value < origin;
    draw(svg, "path", { d: "M0 4l5-4v6z", fill: off ? "#c98a1a" : "none", stroke: off ? "#c98a1a" : "#4a3c3f" });
    if (off) draw(svg, "path", { d: arc(c, r, value, origin), fill: "none", stroke: "#c98a1a", "stroke-width": 2 });
  } else if (value > start) {
    draw(svg, "path", { d: arc(c, r, start, value), fill: "none", stroke: dim ? ink : "#c98a1a", "stroke-width": 2 });
  }
  if (svg.classList.contains("capped")) {
    draw(svg, "path", { d: `M${c - 4} -5h8l-4 6z`, fill: "none", stroke: "#1c1417" });
  }
});

// analyser
let lines = "";
[10, 100, 1000, 10000].forEach((decade) => {
  for (let n = 1; n < 10; n++) {
    const x = Math.round(77 + 146 * Math.log10(n * decade / 100));
    if (x > 2 && x < 420) lines += `M${x}.5 0V150`;
  }
});
document.getElementById("freqlines").setAttribute("d", lines);

let shape = "M0 82 14 67 26 49Q32 38 37 50L44 67 54 85Q62 93 67 90L72 72Q76 50 81 69L87 90 94 108 101 84 106 100 112 90Q118 62 121 100L123 114 127 114 133 89 138 115";
for (let x = 143, step = 11; x < 255; x += step, step = Math.max(3, step * 0.9)) {
  const top = 92 + Math.pow((x - 143) / 112, 1.7) * 42;
  shape += `L${x} ${top}L${x + step / 2} ${Math.min(150, top + 21 - (x - 143) / 7)}`;
}
shape += "L268 150H0z";
document.getElementById("spectrum").setAttribute("d", shape);

// clip overview
let mini = "";
[2, 8, 18, 28, 38, 62, 70, 78, 88, 98, 134, 140, 164, 172, 180, 190, 200, 210].forEach((x, i) => {
  mini += `M${x} 18h8v3h-2v-2h-2v2h-2v-2h-2z`;
  if (i % 3 === 1) mini += `M${x + 6} 12h1v3h-1z`;
});
document.getElementById("mini").setAttribute("d", mini);
```
